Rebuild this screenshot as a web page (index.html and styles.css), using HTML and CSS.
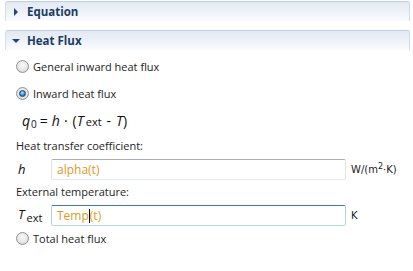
FILE: index.html
```html
<!DOCTYPE html>
<html lang="en">
<head>
    <meta charset="UTF-8">
    <title>Heat Flux</title>
    <link rel="stylesheet" href="styles.css">
</head>
<body>
    <div class="section-header">
        <span class="arrow arrow-right"></span>
        <span class="section-title">Equation</span>
    </div>

    <div class="section-header second">
        <span class="arrow arrow-down"></span>
        <span class="section-title">Heat Flux</span>
    </div>

    <div class="section-body">
        <div class="radio-row">
            <span class="radio"></span>
            <span>General inward heat flux</span>
        </div>
        <div class="radio-row">
            <span class="radio checked"></span>
            <span>Inward heat flux</span>
        </div>
        <div class="formula-row">
            <span class="math">q<sub class="sub-num">0</sub></span>
            <span class="eq">=</span>
            <span class="math">h</span>
            <span class="dot">&middot;</span>
            <span>(</span><span class="math">T</span><sub class="sub-text">ext</sub>
            <span class="minus">-</span>
            <span class="math">T</span><span>)</span>
        </div>

        <div class="label-row">Heat transfer coefficient:</div>
        <div class="input-row">
            <span class="symbol"><span class="math">h</span></span>
            <div class="field">alpha(t)</div>
            <span class="unit">W/(m<sup>2</sup>&middot;K)</span>
        </div>

        <div class="label-row">External temperature:</div>
        <div class="input-row">
            <span class="symbol"><span class="math">T</span><sub class="sub-text">ext</sub></span>
            <div class="field focused">Temp<span class="caret"></span>(t)</div>
            <span class="unit">K</span>
        </div>

        <div class="radio-row last">
            <span class="radio"></span>
            <span>Total heat flux</span>
        </div>
    </div>
</body>
</html>
```

FILE: styles.css
```css
body {
    margin: 0;
    padding-top: 1px;
    background-color: #ffffff;
    font-family: 'Open Sans', 'Liberation Sans', sans-serif;
    font-size: 11px;
    color: #1e1e1e;
}

.section-header {
    display: flex;
    align-items: center;
    height: 19px;
    margin: 0 3px 0 5px;
    border-top: 1px solid #c3cfdf;
    border-left: 1px solid #d6dfeb;
    border-right: 1px solid #d0dae8;
    border-top-left-radius: 3px;
    border-top-right-radius: 2px;
    background: linear-gradient(to bottom, #e3e9f3 0%, #edf1f8 50%, #fbfcfe 100%);
}

.section-header.second {
    margin-top: 9px;
}

.arrow {
    width: 0;
    height: 0;
}

.arrow-right {
    margin-left: 8px;
    margin-right: 9px;
    border-top: 4px solid transparent;
    border-bottom: 4px solid transparent;
    border-left: 4px solid #27467a;
}

.arrow-down {
    margin-left: 6px;
    margin-right: 7px;
    border-left: 4px solid transparent;
    border-right: 4px solid transparent;
    border-top: 4px solid #27467a;
}

.section-title {
    font-weight: bold;
    font-size: 11.5px;
    color: #213c62;
}

.section-body {
    padding: 3px 0 0 16px;
}

.radio-row {
    display: flex;
    align-items: center;
    height: 27px;
    gap: 4px;
}

.radio-row.last {
    height: 25px;
}

.radio {
    box-sizing: border-box;
    width: 13px;
    height: 13px;
    border-radius: 50%;
    border: 1px solid #8d9296;
    background: radial-gradient(circle at 50% 40%, #fbfbfb 0%, #e6e6e6 55%, #c9c9c9 100%);
    display: flex;
    align-items: center;
    justify-content: center;
}

.radio.checked::after {
    content: '';
    width: 7px;
    height: 7px;
    border-radius: 50%;
    border: 1px solid #1d3f6e;
    box-sizing: border-box;
    background: radial-gradient(circle at 45% 35%, #b6ecff 0%, #3aa3e0 45%, #0f4f9a 100%);
}

.formula-row {
    display: flex;
    align-items: baseline;
    height: 27px;
    line-height: 27px;
    padding-left: 6px;
    font-size: 14px;
    color: #111;
}

.math {
    font-style: italic;
}

.sub-num {
    font-size: 10px;
    font-style: normal;
    vertical-align: -2px;
    margin-left: 1px;
}

.sub-text {
    font-size: 11px;
    font-style: normal;
    vertical-align: -3px;
    margin-left: 2px;
}

.eq {
    margin: 0 4px 0 3px;
}

.dot {
    margin: 0 5px 0 4px;
}

.minus {
    margin: 0 5px;
}

.label-row {
    height: 24px;
    line-height: 24px;
}

.input-row {
    display: flex;
    align-items: center;
    height: 22px;
}

.symbol {
    width: 33px;
    padding-left: 2px;
    font-size: 13px;
    color: #111;
}

.field {
    box-sizing: border-box;
    width: 295px;
    height: 21px;
    line-height: 19px;
    padding-left: 5px;
    border: 1px solid #e2e3ea;
    border-top-color: #abadb3;
    border-bottom-color: #e3e9ef;
    border-radius: 2px;
    color: #de9a1c;
    font-size: 12px;
}

.field.focused {
    border-color: #b5cfe7;
    border-top-color: #3d7bad;
    border-bottom-color: #b7d9ed;
}

.caret {
    display: inline-block;
    width: 1px;
    height: 14px;
    background-color: #000;
    vertical-align: -3px;
}

.unit {
    margin-left: 5px;
    font-family: 'DejaVu Sans', sans-serif;
    font-size: 10px;
    color: #222;
}

.unit sup {
    font-size: 8px;
}
```
